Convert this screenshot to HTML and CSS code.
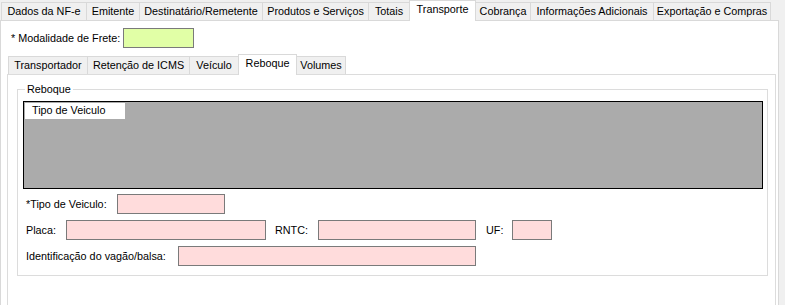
FILE: index.html
```html
<!DOCTYPE html>
<html lang="pt">
<head>
    <meta charset="UTF-8">
    <title>NF-e | Transporte</title>
    <link rel="stylesheet" href="styles.css">
</head>
<body>

<div class="tabctl outer">
    <div class="tabstrip">
        <div class="tab w86">Dados da NF-e</div>
        <div class="tab w54">Emitente</div>
        <div class="tab w124">Destinatário/Remetente</div>
        <div class="tab w107">Produtos e Serviços</div>
        <div class="tab w42">Totais</div>
        <div class="tab active w67">Transporte</div>
        <div class="tab w56">Cobrança</div>
        <div class="tab w124">Informações Adicionais</div>
        <div class="tab w118">Exportação e Compras</div>
    </div>

    <div class="panel">
        <div class="frete-row">
            <label class="lbl-frete">* Modalidade de Frete:</label>
            <div class="input green w71"></div>
        </div>

        <div class="tabctl inner">
            <div class="tabstrip">
                <div class="tab w80">Transportador</div>
                <div class="tab w103">Retenção de ICMS</div>
                <div class="tab w50">Veículo</div>
                <div class="tab active w59">Reboque</div>
                <div class="tab w50">Volumes</div>
            </div>

            <div class="panel">
                <fieldset class="group">
                    <legend>Reboque</legend>

                    <div class="grid">
                        <div class="grid-head">Tipo de Veiculo</div>
                    </div>

                    <div class="form-row">
                        <label class="lbl w91">*Tipo de Veiculo:</label>
                        <div class="input pink w108"></div>
                    </div>
                    <div class="form-row">
                        <label class="lbl w40">Placa:</label>
                        <div class="input pink w200"></div>
                        <label class="lbl w43 gap9">RNTC:</label>
                        <div class="input pink w158"></div>
                        <label class="lbl w26 gap10">UF:</label>
                        <div class="input pink w40"></div>
                    </div>
                    <div class="form-row">
                        <label class="lbl w152">Identificação do vagão/balsa:</label>
                        <div class="input pink w298"></div>
                    </div>
                </fieldset>
            </div>
        </div>
    </div>
</div>

</body>
</html>
```

FILE: styles.css
```css
* { box-sizing: border-box; }

body {
    margin: 0;
    width: 785px;
    height: 305px;
    overflow: hidden;
    background: #f0f0f0;
    color: #000;
    font-family: "Liberation Sans", Arial, sans-serif;
    font-size: 10.8px;
}

/* Tab controls (WinForms look) */
.tabctl { display: flex; flex-direction: column; }
.outer { height: 320px; width: 779px; }
.inner { margin: 6px 0 0 6px; width: 769px; flex: 1; }

.tabstrip { display: flex; align-items: flex-end; height: 20px; padding-left: 1px; flex-shrink: 0; }

.tab {
    height: 18px;
    margin-left: -1px;
    border: 1px solid #d9d9d9;
    border-bottom: none;
    background: #f0f0f0;
    text-align: center;
    line-height: 16px;
    white-space: nowrap;
}
.tab:first-child { margin-left: 0; }
.tab.active {
    position: relative;
    z-index: 1;
    height: 21px;
    margin-bottom: -1px;
    background: #fff;
    line-height: 17px;
}

.panel {
    flex: 1;
    display: flex;
    flex-direction: column;
    border: 1px solid #d9d9d9;
    background: #fff;
}
.inner .panel { border-color: #dcdcdc; }

/* Modalidade de frete */
.frete-row { display: flex; align-items: center; margin: 7px 0 0 10px; height: 20px; }
.lbl-frete { width: 112px; }

/* Group box */
.group {
    margin: 8px 0 0 9px;
    padding: 5px 4px 9px 5px;
    width: 751px;
    border: 1px solid #dcdcdc;
    min-width: 0;
}
.group legend { padding: 0 2px; margin-left: 2px; line-height: 13px; }

.grid {
    height: 88px;
    border: 1px solid #000;
    background: #ababab;
    padding: 1px 0 0 1px;
}
.grid-head {
    width: 100px;
    height: 16px;
    background: #fff;
    padding-left: 7px;
    line-height: 15px;
}

.form-row { display: flex; align-items: center; height: 20px; margin-top: 6px; padding-left: 3px; }
.grid + .form-row { margin-top: 5px; }

.lbl { flex-shrink: 0; white-space: nowrap; }

.input { height: 20px; border: 1px solid #7a7a7a; flex-shrink: 0; }
.input.pink { background: #ffdcdc; }
.input.green { background: #e1ffa6; }

.gap9 { margin-left: 9px; }
.gap10 { margin-left: 10px; }

/* widths */
.w26 { width: 26px; }
.w40 { width: 40px; }
.w42 { width: 42px; }
.w43 { width: 43px; }
.w50 { width: 50px; }
.w54 { width: 54px; }
.w56 { width: 56px; }
.w59 { width: 59px; }
.w67 { width: 67px; }
.w71 { width: 71px; }
.w80 { width: 80px; }
.w86 { width: 86px; }
.w91 { width: 91px; }
.w103 { width: 103px; }
.w107 { width: 107px; }
.w108 { width: 108px; }
.w118 { width: 118px; }
.w124 { width: 124px; }
.w152 { width: 152px; }
.w158 { width: 158px; }
.w200 { width: 200px; }
.w298 { width: 298px; }
```
